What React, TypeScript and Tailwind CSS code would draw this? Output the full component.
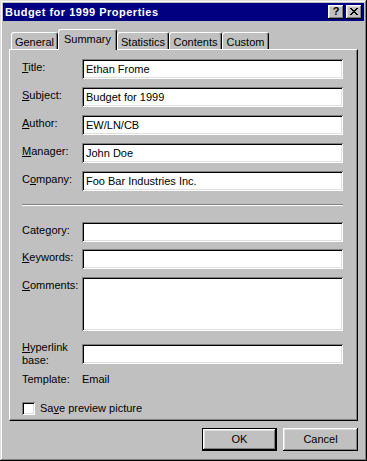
import React from "react";

const raised =
  "shadow-[inset_-1px_-1px_#000,inset_1px_1px_#fff,inset_-2px_-2px_#808080,inset_2px_2px_#dfdfdf]";
const sunken =
  "shadow-[inset_1px_1px_#808080,inset_-1px_-1px_#fff,inset_2px_2px_#000,inset_-2px_-2px_#dfdfdf]";

function Acc({ text, u }: { text: string; u: number }) {
  return (
    <>
      {text.slice(0, u)}
      <span className="underline underline-offset-[1px]">{text[u]}</span>
      {text.slice(u + 1)}
    </>
  );
}

function Field({
  label,
  u,
  value = "",
  h = "h-[20px]",
  className = "",
}: {
  label: string;
  u: number;
  value?: string;
  h?: string;
  className?: string;
}) {
  return (
    <div className={`flex items-start ${className}`}>
      <div className="w-[60px] pt-[2px] leading-[13px]">
        <Acc text={label} u={u} />
      </div>
      <div className={`w-[261px] ${h} bg-white ${sunken} px-[4px] pt-[4px] leading-[13px] whitespace-nowrap`}>
        {value}
      </div>
    </div>
  );
}

const tabs = [
  { label: "General", w: "w-[47px]" },
  { label: "Summary", w: "w-[59px]", active: true },
  { label: "Statistics", w: "w-[52px]" },
  { label: "Contents", w: "w-[53px]" },
  { label: "Custom", w: "w-[47px]" },
];

export default function App() {
  return (
    <div
      className={`w-[367px] h-[461px] bg-[#c0c0c0] p-[3px] flex flex-col text-[11px] text-black font-['Liberation_Sans',Arial,sans-serif] shadow-[inset_-1px_-1px_#000,inset_1px_1px_#dfdfdf,inset_-2px_-2px_#808080,inset_2px_2px_#fff]`}
    >
      {/* Title bar */}
      <div className="h-[18px] bg-[#000080] flex items-center pl-[2px] pr-[2px]">
        <span className="text-white font-bold leading-[13px] tracking-[0.5px]">Budget for 1999 Properties</span>
        <div className="flex-1" />
        <div className="flex gap-[2px]">
          <div className={`w-[16px] h-[14px] bg-[#c0c0c0] ${raised} flex items-center justify-center font-bold text-[11px] leading-none pb-[1px]`}>
            ?
          </div>
          <div className={`w-[16px] h-[14px] bg-[#c0c0c0] ${raised} flex items-center justify-center pb-[1px]`}>
            <svg width="8" height="7" viewBox="0 0 8 7" shapeRendering="crispEdges">
              <path d="M0 0h2v1h-2zM6 0h2v1h-2zM1 1h2v1h-2zM5 1h2v1h-2zM2 2h4v1h-4zM3 3h2v1h-2zM2 4h4v1h-4zM1 5h2v1h-2zM5 5h2v1h-2zM0 6h2v1h-2zM6 6h2v1h-2z" fill="#000" />
            </svg>
          </div>
        </div>
      </div>

      {/* Tabs */}
      <div className="relative z-10 mt-[8px] h-[21px] -mb-[1px] ml-[8px] flex items-end">
        {tabs.map((t) =>
          t.active ? (
            <div
              key={t.label}
              className={`${t.w} h-[21px] bg-[#c0c0c0] border-l border-t border-r border-l-white border-t-white border-r-black rounded-t-[3px] shadow-[inset_-1px_0_#808080] pt-[3px] leading-[13px] text-center`}
            >
              {t.label}
            </div>
          ) : (
            <div
              key={t.label}
              className={`${t.w} h-[17px] mb-[1px] bg-[#c0c0c0] border-l border-t border-r border-l-white border-t-white border-r-black rounded-t-[3px] shadow-[inset_-1px_0_#808080] pt-[3px] leading-[13px] text-center`}
            >
              {t.label}
            </div>
          )
        )}
      </div>

      {/* Panel */}
      <div className="mx-[6px] h-[372px] border border-l-white border-t-white border-r-black border-b-black shadow-[inset_-1px_-1px_#808080] pl-[12px] pt-[9px]">
        <Field label="Title:" u={0} value="Ethan Frome" />
        <Field label="Subject:" u={0} value="Budget for 1999" className="mt-[8px]" />
        <Field label="Author:" u={0} value="EW/LN/CB" className="mt-[8px]" />
        <Field label="Manager:" u={0} value="John Doe" className="mt-[8px]" />
        <Field label="Company:" u={1} value="Foo Bar Industries Inc." className="mt-[8px]" />

        <div className="mt-[13px] w-[321px] h-[2px] border-t border-t-[#808080] border-b border-b-white" />

        <Field label="Category:" u={4} className="mt-[16px]" />
        <Field label="Keywords:" u={0} className="mt-[7px]" />
        <Field label="Comments:" u={0} h="h-[54px]" className="mt-[8px]" />

        <div className="flex items-start mt-[13px]">
          <div className="w-[60px] -mt-[3px] leading-[13px]">
            <Acc text="Hyperlink" u={0} />
            <br />
            base:
          </div>
          <div className={`w-[261px] h-[20px] bg-white ${sunken}`} />
        </div>

        <div className="flex mt-[6px] leading-[13px]">
          <div className="w-[60px]">Template:</div>
          <div>Email</div>
        </div>

        <div className="flex items-center mt-[16px] leading-[13px]">
          <div className={`w-[13px] h-[13px] bg-white ${sunken}`} />
          <span className="ml-[5px]">
            <Acc text="Save preview picture" u={2} />
          </span>
        </div>
      </div>

      {/* Buttons */}
      <div className="mt-[7px] mr-[6px] flex justify-end gap-[6px]">
        <div className="w-[75px] h-[23px] border border-black">
          <div className={`w-full h-full ${raised} flex items-center justify-center leading-[13px]`}>OK</div>
        </div>
        <div className={`w-[75px] h-[23px] ${raised} flex items-center justify-center leading-[13px]`}>Cancel</div>
      </div>
    </div>
  );
}
